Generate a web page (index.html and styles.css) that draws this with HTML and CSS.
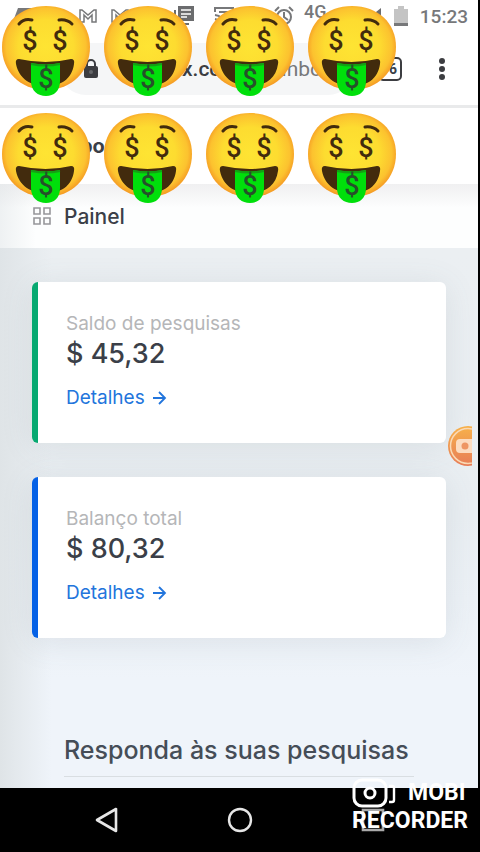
FILE: index.html
```html
<!DOCTYPE html>
<html lang="pt-BR">
<head>
    <meta charset="UTF-8">
    <meta name="viewport" content="width=device-width, initial-scale=1.0">
    <title>Painel</title>
    <link rel="stylesheet" href="styles.css">
</head>
<body>
    <!-- Emoji drawing, reused by the overlay -->
    <svg class="defs" aria-hidden="true">
        <defs>
            <radialGradient id="face" cx="50%" cy="48%" r="52%">
                <stop offset="0" stop-color="#fee433"/>
                <stop offset="0.6" stop-color="#fddc30"/>
                <stop offset="0.87" stop-color="#fcc22f"/>
                <stop offset="1" stop-color="#f59b24"/>
            </radialGradient>
            <symbol id="money" viewBox="0 0 88 90">
                <path d="M44 0C70 0 88 17 88 41S70 84 44 84 0 65 0 41 18 0 44 0z" fill="url(#face)"/>
                <path d="M17 18q5-6 13-4M57 14q8-1 13 4" fill="none" stroke="#422b0d" stroke-width="3" stroke-linecap="round"/>
                <path d="M17 53q27 6 52 0 4 0 3 5C70 73 59 80 44 80S17 73 14 58q-1-5 3-5z" fill="#422b0d"/>
                <path d="M29 57q15 3 29 0v18c0 10-6 15-14 15s-15-5-15-15z" fill="#00df0b"/>
                <path d="M29 58q15 3 29 0" fill="none" stroke="#159f15" stroke-width="2"/>
                <g class="dollar">
                    <text x="28" y="44">$</text>
                    <text x="58" y="44">$</text>
                    <text class="tongue" x="44" y="82">$</text>
                </g>
            </symbol>
        </defs>
    </svg>

    <div class="screen">
        <div class="status-bar">
            <svg class="ic-app" width="54" height="16" viewBox="0 0 54 16"><path d="M6 0h40l8 16H0z" fill="#77787a"/></svg>
            <svg width="20" height="16" viewBox="0 0 20 16" fill="none" stroke="#77787a" stroke-width="1.5"><path d="M2 14V2h2l6 5 6-5h2v12h-4V7l-4 4-4-4v7z"/></svg>
            <svg class="ic-mail" width="20" height="16" viewBox="0 0 20 16" fill="none" stroke="#77787a" stroke-width="1.5"><path d="M2 14V2h2l6 5 6-5h2v12h-4V7l-4 4-4-4v7z"/></svg>
            <svg class="ic-news" width="20" height="20" viewBox="0 0 20 20"><path d="M4 0h16v15H4z" fill="#6b6c6e"/><path d="M7 4h10M7 8h10M7 11h6" stroke="#fff" stroke-width="1.5"/><path d="M1 4v14h14" fill="none" stroke="#6b6c6e" stroke-width="2"/></svg>
            <svg class="ic-cast" width="20" height="18" viewBox="0 0 20 18" fill="none" stroke="#77787a" stroke-width="2"><path d="M1 5V1h18v16h-7M1 8q8 1 9 9M1 12q4 1 5 5M5 5h10v8"/></svg>
            <svg class="ic-alarm" width="20" height="20" viewBox="0 0 20 20" fill="none" stroke="#77787a" stroke-width="2"><circle cx="10" cy="11" r="7"/><path d="M10 6v5l4 3M1 5l4-4M19 5l-4-4"/></svg>
            <span class="network">4G</span>
            <svg class="ic-signal" width="20" height="16" viewBox="0 0 20 16"><path d="M20 0v16H0z" fill="#6b6c6e"/></svg>
            <svg class="ic-battery" width="14" height="20" viewBox="0 0 14 20"><path d="M0 3h4V0h6v3h4v14H0z" fill="#c4c4c4"/><path d="M0 17h14v3H0z" fill="#77787a"/></svg>
            <time class="clock">15:23</time>
        </div>

        <div class="browser-bar">
            <button class="address" aria-label="Endereço">
                <svg width="14" height="20" viewBox="0 0 14 20"><path d="M3 8V5a4 4 0 0 1 8 0v3" fill="none" stroke="#3c3d41" stroke-width="2"/><rect y="7" width="14" height="12" rx="2" fill="#3c3d41"/><circle cx="7" cy="13" r="2" fill="#66676a"/></svg>
                <span class="host">x.com</span>
                <span class="path">inbo</span>
            </button>
            <button class="tabs" aria-label="Guias">6</button>
            <button class="menu" aria-label="Mais opções">
                <svg width="8" height="24" viewBox="0 0 8 24" fill="#3c3d41"><circle cx="4" cy="4" r="3"/><circle cx="4" cy="12" r="3"/><circle cx="4" cy="20" r="3"/></svg>
            </button>
        </div>

        <header class="site-header">
            <span class="brand">bo</span>
        </header>

        <div class="page-title">
            <svg width="20" height="20" viewBox="0 0 20 20" fill="none" stroke="#96979a" stroke-width="1.6"><path d="M2 2h6v6H2zM12 2h6v6h-6zM2 12h6v6H2zM12 12h6v6h-6z"/></svg>
            <h1>Painel</h1>
        </div>

        <main class="content">
            <section class="card card-green">
                <p class="label">Saldo de pesquisas</p>
                <p class="amount">$ 45,32</p>
                <a class="details" href="#">Detalhes
                    <svg width="16" height="16" viewBox="0 0 16 16" fill="none" stroke="currentColor" stroke-width="1.8"><path d="M2 8h12M8 2l6 6-6 6"/></svg>
                </a>
            </section>
            <section class="card card-blue">
                <p class="label">Balanço total</p>
                <p class="amount">$ 80,32</p>
                <a class="details" href="#">Detalhes
                    <svg width="16" height="16" viewBox="0 0 16 16" fill="none" stroke="currentColor" stroke-width="1.8"><path d="M2 8h12M8 2l6 6-6 6"/></svg>
                </a>
            </section>
            <h2 class="surveys">Responda às suas pesquisas</h2>
        </main>
    </div>

    <nav class="android-nav">
        <button aria-label="Voltar"><svg width="26" height="28" viewBox="0 0 26 28" fill="none" stroke="#e6e6e6" stroke-width="2.6" stroke-linejoin="round"><path d="M22 3v22L3 14z"/></svg></button>
        <button aria-label="Início"><svg width="26" height="28" viewBox="0 0 26 28" fill="none" stroke="#e6e6e6" stroke-width="2.4"><circle cx="13" cy="14" r="11"/></svg></button>
        <button aria-label="Recentes"><svg width="26" height="28" viewBox="0 0 26 28" fill="none" stroke="#aaa" stroke-width="2.6"><path d="M3 4h20v20H3z"/></svg></button>
    </nav>

    <div class="emojis" aria-hidden="true">
        <svg><use href="#money"/></svg>
        <svg><use href="#money"/></svg>
        <svg><use href="#money"/></svg>
        <svg><use href="#money"/></svg>
        <svg><use href="#money"/></svg>
        <svg><use href="#money"/></svg>
        <svg><use href="#money"/></svg>
        <svg><use href="#money"/></svg>
    </div>

    <button class="recorder" aria-label="Gravador">
        <svg width="24" height="40" viewBox="0 0 24 40">
            <defs><linearGradient id="rec" x2="0" y2="1"><stop offset="0" stop-color="#f7b14a"/><stop offset="1" stop-color="#e77d58"/></linearGradient></defs>
            <circle cx="20" cy="20" r="20" fill="url(#rec)"/>
            <circle cx="20" cy="20" r="17.5" fill="none" stroke="#fad9b4" stroke-width="1.5"/>
            <rect x="8" y="13" width="22" height="14" rx="4" fill="#fcdcc0"/>
            <circle cx="17" cy="20" r="3.5" fill="#ee9663"/>
        </svg>
    </button>

    <div class="watermark">
        <div class="watermark-top">
            <svg width="44" height="30" viewBox="0 0 44 30" fill="none" stroke="#fff" stroke-width="3"><rect x="2" y="2" width="32" height="26" rx="8"/><circle cx="18" cy="15" r="5"/><path d="M37 8h3q2 0 2 2v12q0 2-2 2h-3" stroke-width="2.4"/></svg>
            <span>MOBI</span>
        </div>
        <span>RECORDER</span>
    </div>
</body>
</html>
```
FILE: styles.css
```css
* {
    box-sizing: border-box;
}

body {
    font-family: Inter, "Open Sans", sans-serif;
    margin: 0;
    position: relative;
    display: flex;
    flex-direction: column;
    min-height: 100vh;
    overflow-x: hidden;
    background: #000;
    color: #3b3f48;
}

button {
    border: none;
    padding: 0;
    background: none;
    font: inherit;
    color: inherit;
}

svg {
    display: block;
    flex: none;
}

h1, h2, p {
    margin: 0;
}

.defs {
    position: absolute;
    width: 0;
    height: 0;
}

.screen {
    flex: 1;
    display: flex;
    flex-direction: column;
    margin-right: 2px;
    background: #fff;
}

/* Phone status bar */
.status-bar {
    display: flex;
    align-items: center;
    height: 32px;
    padding: 0 10px 0 12px;
    font-family: Roboto, sans-serif;
    color: #77787a;
}

.ic-app {
    margin-right: 12px;
}

.ic-mail {
    margin-left: 12px;
}

.ic-news {
    margin-left: 44px;
}

.ic-cast {
    margin-left: 20px;
}

.ic-alarm {
    margin-left: 40px;
}

.network {
    margin-left: 10px;
    font-size: 18px;
    font-weight: 500;
    line-height: 20px;
    padding-bottom: 8px;
}

.ic-signal {
    margin-left: 34px;
}

.ic-battery {
    margin-left: auto;
}

.clock {
    margin-left: 12px;
    font-size: 19px;
    font-weight: 500;
}

/* Browser toolbar */
.browser-bar {
    display: flex;
    align-items: center;
    height: 76px;
    padding: 0 32px 0 60px;
    border-bottom: 3px solid #e9eaeb;
    font-family: Roboto, sans-serif;
}

.address {
    display: flex;
    align-items: center;
    flex: 1;
    height: 52px;
    padding: 0 24px;
    border-radius: 26px;
    background: #f5f6f7;
    font-size: 21px;
}

.host {
    margin-left: 84px;
    font-weight: 500;
    color: #3c3d41;
}

.path {
    margin-left: 42px;
    color: #77787a;
}

.tabs {
    width: 24px;
    height: 24px;
    margin-left: 24px;
    border: 2px solid #3c3d41;
    border-radius: 5px;
    font-size: 14px;
    font-weight: 700;
    text-align: right;
    padding-right: 3px;
}

.menu {
    margin-left: 36px;
}

/* Site */
.site-header {
    display: flex;
    align-items: center;
    height: 76px;
    padding: 0 80px;
}

.brand {
    font-size: 20px;
    font-weight: 700;
}

.page-title {
    display: flex;
    align-items: center;
    gap: 12px;
    height: 64px;
    padding: 0 32px;
    background:
        linear-gradient(to right, rgba(223, 228, 231, 0.5), rgba(223, 228, 231, 0) 36px),
        linear-gradient(to bottom, #f0f0f1, #fdfefe 24px);
}

.page-title h1 {
    font-size: 21px;
    font-weight: 500;
}

.content {
    flex: 1;
    display: flex;
    flex-direction: column;
    padding: 34px 32px 8px;
    background:
        linear-gradient(to right, #dfe4e7, rgba(223, 228, 231, 0) 52px),
        linear-gradient(to bottom, #ebeff2, #e9eef2 50%, #eff4fa 80%);
}

.card {
    height: 161px;
    margin-bottom: 34px;
    padding: 30px 28px;
    border-left: 6px solid;
    border-radius: 6px;
    background: #fff;
    box-shadow: 0 4px 32px rgba(90, 105, 115, 0.12);
}

.card-green {
    border-color: #07a971;
}

.card-blue {
    border-color: #0561e6;
}

.label {
    font-size: 19px;
    line-height: 24px;
    color: #b5b6b8;
}

.amount {
    font-size: 27px;
    font-weight: 500;
    line-height: 36px;
}

.details {
    display: inline-flex;
    align-items: center;
    gap: 6px;
    margin-top: 14px;
    font-size: 19px;
    line-height: 24px;
    color: #2275dc;
    text-decoration: none;
}

.surveys {
    margin: 62px 32px 0;
    padding-bottom: 10px;
    border-bottom: 1px solid #d9dee2;
    font-size: 25px;
    font-weight: 500;
    line-height: 32px;
    white-space: nowrap;
    color: #454d57;
}

/* Android buttons */
.android-nav {
    display: flex;
    justify-content: space-between;
    align-items: center;
    height: 64px;
    padding: 0 94px;
}

/* Overlays */
.emojis {
    position: absolute;
    top: 6px;
    left: 2px;
    display: grid;
    grid-template-columns: repeat(4, 88px);
    gap: 17px 14px;
}

.emojis svg {
    width: 88px;
    height: 90px;
}

.dollar {
    font-family: Roboto, sans-serif;
    font-size: 27px;
    font-weight: 500;
    text-anchor: middle;
    fill: #422b0d;
}

.dollar .tongue {
    fill: #26502a;
}

.recorder {
    position: absolute;
    top: 426px;
    right: 8px;
}

.watermark {
    position: absolute;
    right: 12px;
    bottom: 18px;
    font-family: Roboto, sans-serif;
    font-size: 23px;
    font-weight: 700;
    line-height: 26px;
    color: #fff;
}

.watermark-top {
    display: flex;
    align-items: center;
    gap: 12px;
}
```
